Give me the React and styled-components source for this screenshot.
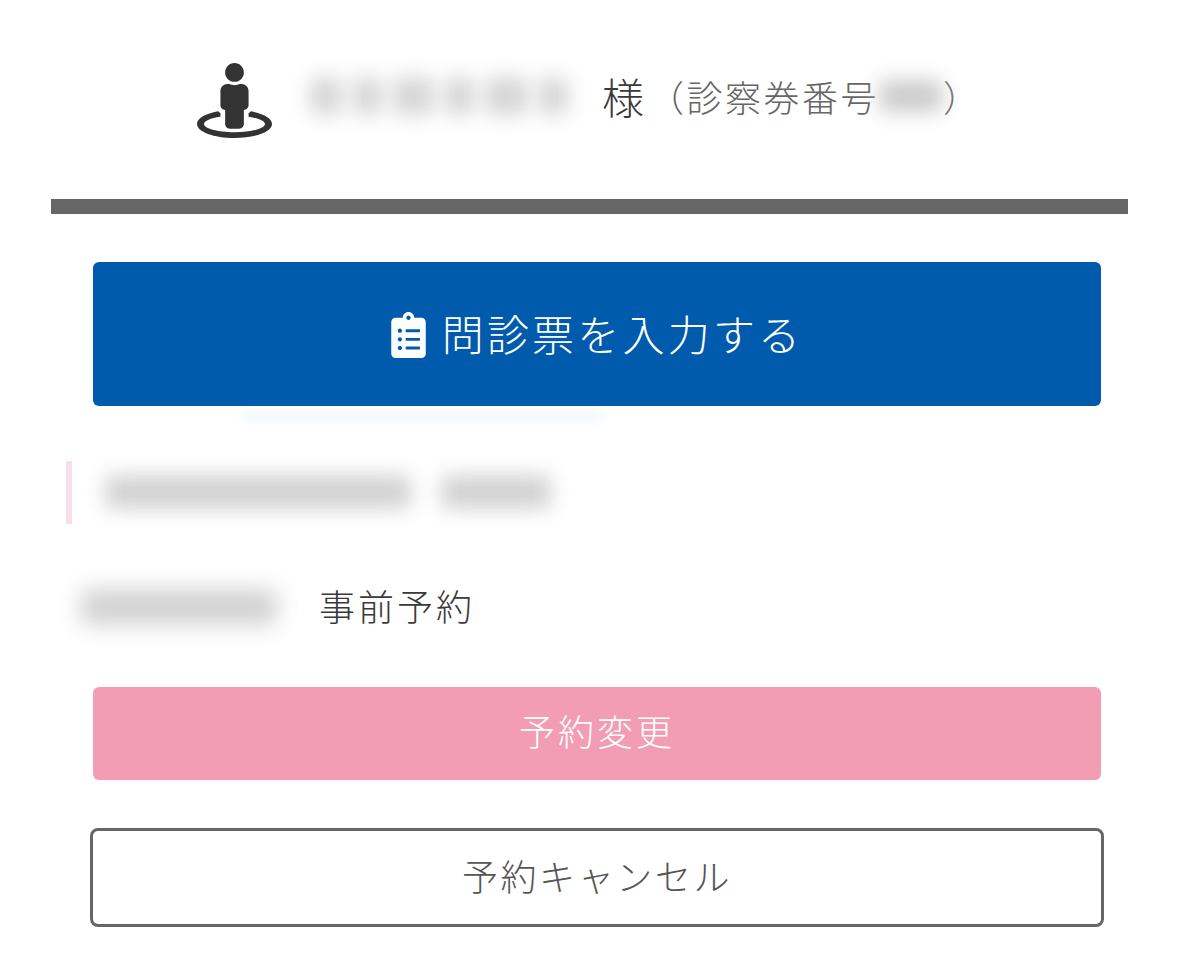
import styled, { createGlobalStyle } from "styled-components";
import { FaStreetView, FaClipboardList } from "react-icons/fa";

const GlobalStyle = createGlobalStyle`
  body {
    margin: 0;
    background: #ffffff;
    font-family: "Noto Sans CJK JP", "Noto Sans", sans-serif;
    font-weight: 300;
    color: #333333;
  }
`;

const Page = styled.div`
  width: 1179px;
  height: 953px;
  overflow: hidden;
  padding: 0 51px;
  box-sizing: border-box;
`;

const Header = styled.header`
  height: 199px;
  padding: 63px 0 0 146px;
  box-sizing: border-box;
  display: flex;
  align-items: flex-start;
`;

const PersonIcon = styled(FaStreetView)`
  width: 75px;
  height: 75px;
  color: #333333;
  flex-shrink: 0;
`;

const NameBlur = styled.div`
  display: flex;
  gap: 10px;
  margin: 14px 0 0 38px;
  width: 292px;
`;

// ぼかされた部分
const Smudge = styled.span`
  display: block;
  width: ${(p) => p.$w}px;
  height: ${(p) => p.$h}px;
  background: ${(p) => p.$color || "#c4c4c4"};
  border-radius: 8px;
  filter: blur(${(p) => p.$blur || 8}px);
  flex-shrink: 0;
`;

const Honorific = styled.span`
  font-size: 42px;
  line-height: 66px;
  color: #3a3a3a;
`;

const TicketNo = styled.span`
  display: flex;
  align-items: center;
  margin-left: 4px;
  height: 66px;
  font-size: 36px;
  letter-spacing: 2.5px;
  color: #666666;
`;

const Divider = styled.div`
  height: 15px;
  background: #666666;
`;

const Body = styled.main`
  padding: 48px 27px 0 42px;
`;

const PrimaryButton = styled.button`
  width: 1008px;
  height: 144px;
  border: none;
  border-radius: 6px;
  background: #005bac;
  color: #ffffff;
  font: inherit;
  font-size: 42px;
  letter-spacing: 3.2px;
  display: flex;
  align-items: center;
  justify-content: center;
  gap: 16px;
  padding: 0 0 4px;
`;

const ClipIcon = styled(FaClipboardList)`
  width: 35px;
  height: 46px;
  margin-top: 6px;
`;

const Halo = styled.div`
  margin: 8px 0 0 150px;
`;

const DateRow = styled.div`
  margin: 42px 0 0 -27px;
  height: 63px;
  box-sizing: border-box;
  border-left: 6px solid #f3e0ea;
  padding: 0 0 2px 33px;
  display: flex;
  align-items: center;
  gap: 30px;
`;

const InfoRow = styled.div`
  margin: 44px 0 0 -12px;
  height: 78px;
  display: flex;
  align-items: center;
  gap: 42px;
  font-size: 36px;
  letter-spacing: 3px;
  color: #3a3a3a;
`;

const InfoText = styled.span`
  margin-bottom: 5px;
`;

const ChangeButton = styled.button`
  display: block;
  width: 1008px;
  height: 93px;
  margin-top: 41px;
  border: none;
  border-radius: 6px;
  background: #f39db5;
  color: #ffffff;
  font: inherit;
  font-size: 36px;
  letter-spacing: 3px;
  padding: 0 0 7px;
`;

const CancelButton = styled.button`
  display: block;
  width: 1014px;
  height: 99px;
  margin: 48px 0 0 -3px;
  border: 3px solid #666666;
  border-radius: 8px;
  background: #ffffff;
  color: #555555;
  font: inherit;
  font-size: 36px;
  letter-spacing: 2.6px;
  padding: 0 0 5px;
`;

export default function App() {
  return (
    <>
      <GlobalStyle />
      <Page>
        <Header>
          <PersonIcon />
          <NameBlur>
            {[32, 30, 42, 30, 44, 30].map((w, i) => (
              <Smudge key={i} $w={w} $h={38} $color="#d6d6d6" $blur={10} />
            ))}
          </NameBlur>
          <Honorific>様</Honorific>
          <TicketNo>
            （診察券番号
            <Smudge $w={64} $h={32} $color="#cccccc" $blur={10} />）
          </TicketNo>
        </Header>
        <Divider />
        <Body>
          <PrimaryButton>
            <ClipIcon />
            問診票を入力する
          </PrimaryButton>
          <Halo>
            <Smudge $w={360} $h={5} $color="#e6eef9" $blur={5} />
          </Halo>
          <DateRow>
            <Smudge $w={306} $h={34} $color="#d2d2d2" $blur={10} />
            <Smudge $w={110} $h={34} $color="#d2d2d2" $blur={10} />
          </DateRow>
          <InfoRow>
            <Smudge $w={196} $h={36} $color="#d2d2d2" $blur={11} />
            <InfoText>事前予約</InfoText>
          </InfoRow>
          <ChangeButton>予約変更</ChangeButton>
          <CancelButton>予約キャンセル</CancelButton>
        </Body>
      </Page>
    </>
  );
}
